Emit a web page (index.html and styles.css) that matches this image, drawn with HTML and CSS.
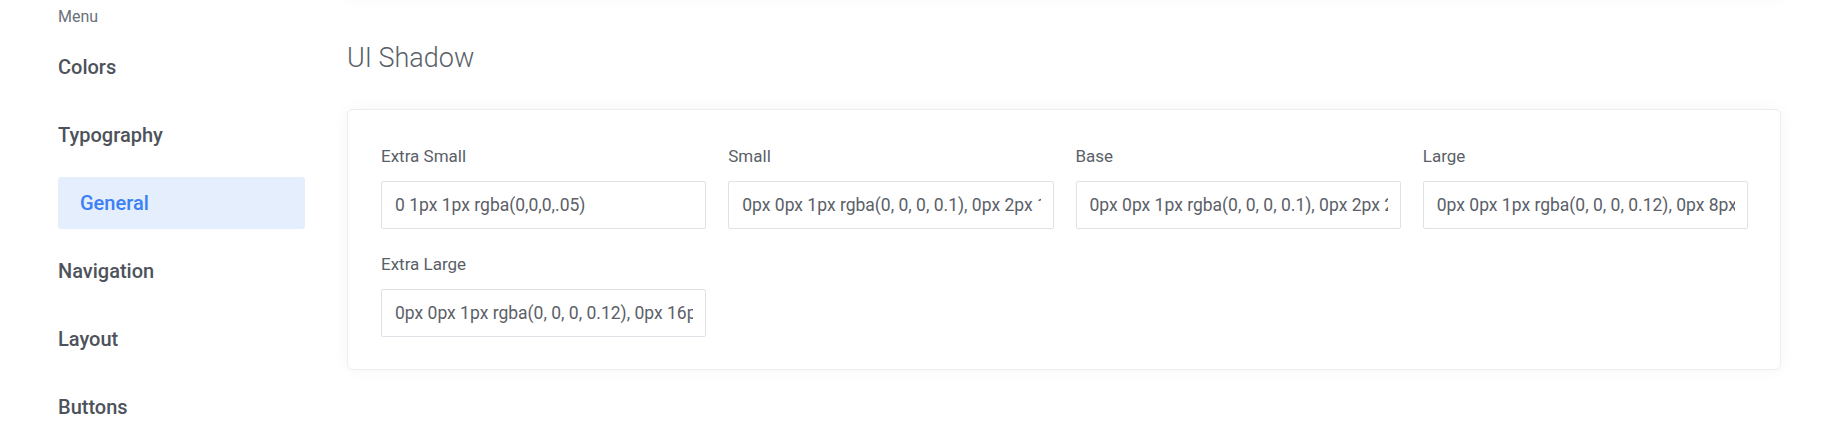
FILE: index.html
```html
<!DOCTYPE html>
<html lang="en">
<head>
<meta charset="utf-8">
<title>UI Shadow</title>
<link rel="stylesheet" href="styles.css">
</head>
<body>
<div class="layout">
  <aside class="sidebar">
    <div class="menu-label">Menu</div>
    <nav class="nav">
      <a class="nav-item">Colors</a>
      <a class="nav-item">Typography</a>
      <a class="nav-item nav-item-active">General</a>
      <a class="nav-item">Navigation</a>
      <a class="nav-item">Layout</a>
      <a class="nav-item">Buttons</a>
    </nav>
  </aside>
  <main class="main">
    <div class="prev-card"></div>
    <h2 class="section-title">UI Shadow</h2>
    <div class="card">
      <div class="field-grid">
        <div class="field">
          <label class="field-label">Extra Small</label>
          <input class="field-input" type="text" value="0 1px 1px rgba(0,0,0,.05)">
        </div>
        <div class="field">
          <label class="field-label">Small</label>
          <input class="field-input" type="text" value="0px 0px 1px rgba(0, 0, 0, 0.1), 0px 2px 1px rgba(0, 0, 0, 0.06)">
        </div>
        <div class="field">
          <label class="field-label">Base</label>
          <input class="field-input" type="text" value="0px 0px 1px rgba(0, 0, 0, 0.1), 0px 2px 2px rgba(0, 0, 0, 0.06)">
        </div>
        <div class="field">
          <label class="field-label">Large</label>
          <input class="field-input" type="text" value="0px 0px 1px rgba(0, 0, 0, 0.12), 0px 8px 16px rgba(0, 0, 0, 0.08)">
        </div>
        <div class="field">
          <label class="field-label">Extra Large</label>
          <input class="field-input" type="text" value="0px 0px 1px rgba(0, 0, 0, 0.12), 0px 16px 32px rgba(0, 0, 0, 0.1)">
        </div>
      </div>
    </div>
  </main>
</div>
</body>
</html>
```
FILE: styles.css
```css
* {
  box-sizing: border-box;
}

html, body {
  margin: 0;
  padding: 0;
  background: #ffffff;
  font-family: Roboto, "Liberation Sans", Arial, sans-serif;
}

body {
  height: 422px;
  overflow: hidden;
}

.layout {
  display: flex;
  align-items: flex-start;
}

.sidebar {
  flex: 0 0 347px;
  padding: 6.5px 0 0 58px;
}

.menu-label {
  font-size: 16px;
  line-height: 20px;
  color: #6b7079;
  margin-bottom: 14.5px;
}

.nav {
  display: flex;
  flex-direction: column;
  gap: 16px;
}

.nav-item {
  display: flex;
  align-items: center;
  width: 247px;
  height: 52px;
  font-size: 20px;
  font-weight: 500;
  color: #4d525b;
  border-radius: 3px;
  cursor: pointer;
}

.nav-item-active {
  background: #e4eefc;
  color: #3b80f5;
  padding-left: 22px;
}

.main {
  flex: 0 0 1434px;
}

.prev-card {
  height: 40px;
  margin-top: -42px;
  background: #ffffff;
  border: 1px solid #eceef1;
  border-radius: 6px;
  box-shadow: 0 0 16px rgba(0, 0, 0, 0.045);
}

.section-title {
  margin: 45px 0 35px 0;
  font-size: 27px;
  line-height: 31px;
  font-weight: 300;
  color: #5a5f68;
}

.card {
  background: #ffffff;
  border: 1px solid #eceef1;
  border-radius: 6px;
  box-shadow: 0 0 16px rgba(0, 0, 0, 0.045);
  padding: 36px 32px 32px 33px;
}

.field-grid {
  display: grid;
  grid-template-columns: repeat(4, 1fr);
  column-gap: 22px;
  row-gap: 25px;
}

.field {
  display: flex;
  flex-direction: column;
  min-width: 0;
}

.field-label {
  font-size: 17px;
  line-height: 20px;
  color: #5a5f67;
  margin-bottom: 15px;
}

.field-input {
  width: 100%;
  height: 48px;
  padding: 0 12px 0 13px;
  border: 1px solid #dfe2e6;
  border-radius: 2px;
  background: #ffffff;
  font-family: Roboto, "Liberation Sans", Arial, sans-serif;
  font-size: 17.5px;
  color: #5b6068;
  outline: none;
}
```
